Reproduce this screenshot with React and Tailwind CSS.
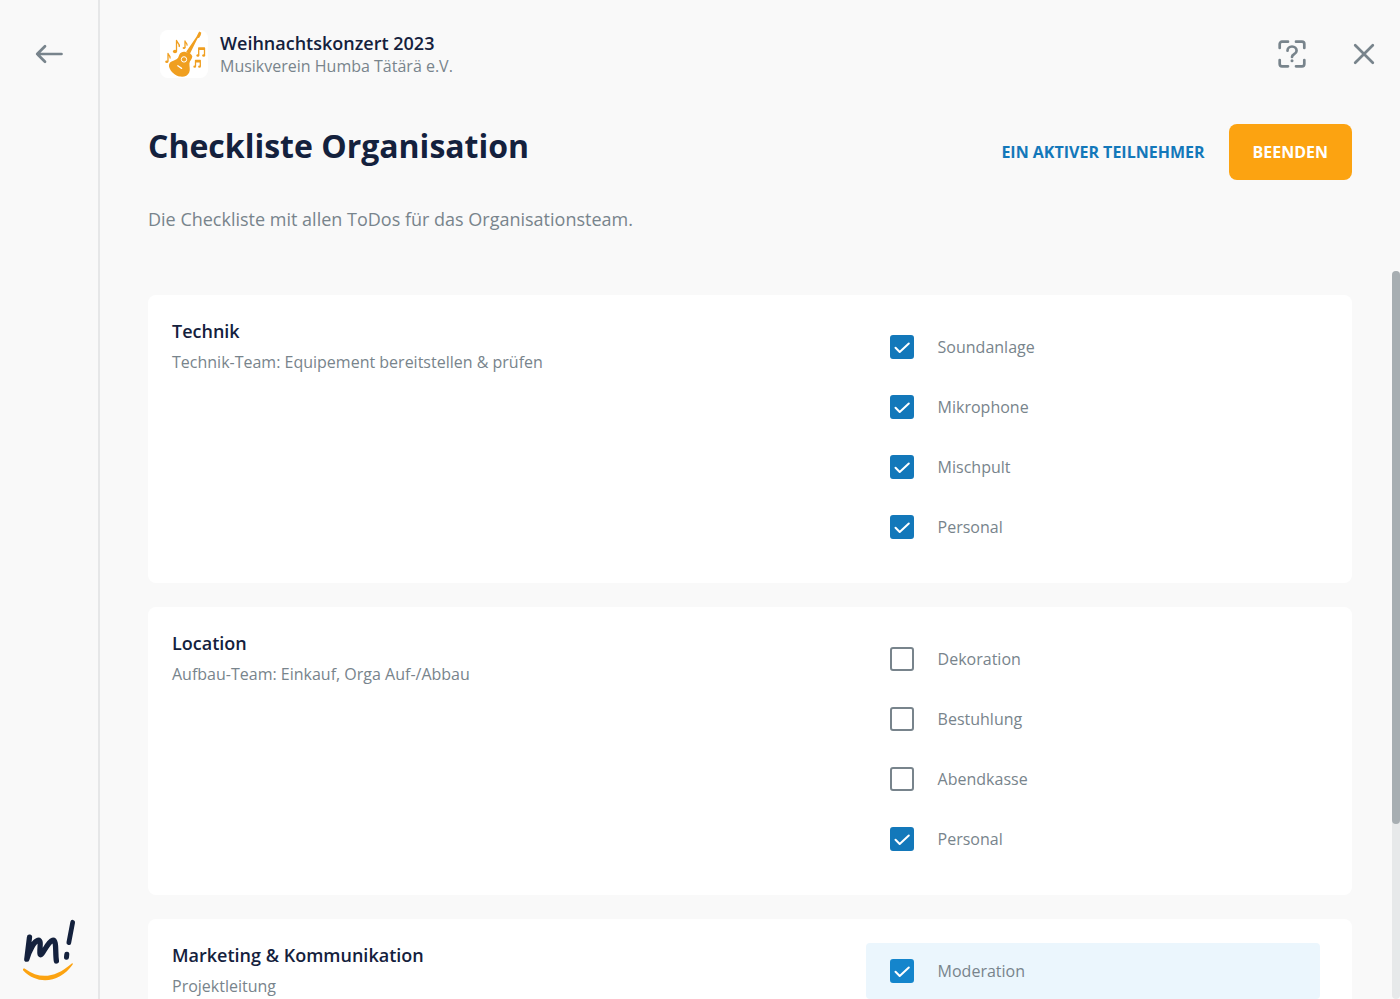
import { useState } from "react";

const SECTIONS = [
  {
    title: "Technik",
    subtitle: "Technik-Team: Equipement bereitstellen & prüfen",
    items: [
      { label: "Soundanlage", checked: true },
      { label: "Mikrophone", checked: true },
      { label: "Mischpult", checked: true },
      { label: "Personal", checked: true },
    ],
  },
  {
    title: "Location",
    subtitle: "Aufbau-Team: Einkauf, Orga Auf-/Abbau",
    items: [
      { label: "Dekoration", checked: false },
      { label: "Bestuhlung", checked: false },
      { label: "Abendkasse", checked: false },
      { label: "Personal", checked: true },
    ],
  },
  {
    title: "Marketing & Kommunikation",
    subtitle: "Projektleitung",
    items: [{ label: "Moderation", checked: true, active: true }],
  },
];

function BackIcon() {
  return (
    <svg viewBox="0 0 32 32" className="size-8" fill="none" stroke="currentColor" strokeWidth="2.7" strokeLinecap="round" strokeLinejoin="round" aria-hidden="true">
      <path d="M28.500 16H4.200M12 8.200L4.200 16l7.800 7.800" />
    </svg>
  );
}

function HelpIcon() {
  return (
    <svg viewBox="0 0 32 32" className="size-8" fill="none" stroke="currentColor" strokeWidth="2.700" strokeLinecap="round" strokeLinejoin="round" aria-hidden="true">
      <path d="M3.700 10V6a2.300 2.300 0 0 1 2.300-2.300h6M20 3.700h6A2.300 2.300 0 0 1 28.300 6v4M28.300 22v4a2.300 2.300 0 0 1-2.300 2.300h-6M12 28.300H6A2.300 2.300 0 0 1 3.700 26v-4" />
      <path d="M11.500 12.700c0-2.400 2-4.200 4.500-4.200s4.600 1.800 4.600 4.300c0 3.600-4.600 3.200-4.600 6.200" />
      <circle cx="16" cy="22.800" r="1.500" fill="currentColor" stroke="none" />
    </svg>
  );
}

function CloseIcon() {
  return (
    <svg viewBox="0 0 32 32" className="size-8" fill="none" stroke="currentColor" strokeWidth="2.700" strokeLinecap="round" aria-hidden="true">
      <path d="M7.200 7.200l17.600 17.600M24.800 7.200L7.200 24.800" />
    </svg>
  );
}

function GuitarLogo() {
  return (
    <svg viewBox="0 0 48 48" className="size-12" aria-hidden="true">
      <g fill="#f09f20">
        <path d="M38.600 2.600L39.600 1.600L41.300 2.700L40.700 5.300L39.200 7.700L37.600 8.300L29.800 24L26.200 21.800L36.500 6.800Z" />
        <path d="M19.400 24.600C20.600 22 23.600 21.400 26 22.200C28.500 22 32.200 24 32.300 26.600C32.300 29.300 29.600 30.600 29.400 33.600C29.300 36.500 30.500 39.500 29.200 42.600C27.800 46 24 47.200 20 46.600C15.500 46 10.500 41.500 9.200 37.200C8.300 33.500 10.500 31.300 14 30.400C18.500 29.200 18.200 27.200 19.400 24.600Z" />
      </g>
      <circle cx="24" cy="29.400" r="2.700" fill="none" stroke="#fff" strokeWidth="1" />
      <path d="M17.800 35.800l3.800 2.600" stroke="#fff" strokeWidth="1.300" strokeLinecap="round" />
      <g fill="none" stroke="#f09f20" strokeWidth="1.300" strokeLinejoin="round">
        <path d="M16.500 21V10.500c.5 2.500 3.500 2.500 2.700 6.500M25 18v-7c.3 1.800 2.600 1.800 2 4.600M8 31.500v-8c.4 2 2.700 2 2 5" />
        <path d="M38.700 25v-7h5.800v7M38.700 19.300h5.800M35.500 36.500v-6h4.800v6M35.500 31.800h4.800" />
      </g>
      <g fill="#f09f20">
        <ellipse cx="15" cy="21.500" rx="2.100" ry="1.700" />
        <ellipse cx="24" cy="18" rx="1.400" ry="1.100" />
        <ellipse cx="6.800" cy="31.700" rx="1.600" ry="1.300" />
        <ellipse cx="37.900" cy="25.500" rx="1.500" ry="1.200" />
        <ellipse cx="43.700" cy="25.500" rx="1.500" ry="1.200" />
        <ellipse cx="34.700" cy="36.700" rx="1.400" ry="1.100" />
        <ellipse cx="39.500" cy="36.700" rx="1.400" ry="1.100" />
      </g>
    </svg>
  );
}

function BrandLogo() {
  return (
    <svg viewBox="0 0 54 64" className="h-16 w-[54px]" fill="none" stroke="#14213d" strokeLinecap="round" strokeLinejoin="round" aria-hidden="true">
      <path strokeWidth="5.300" d="M7.500 18.200L4.800 40.200C7.500 31 12 22.800 16 21.300C20.300 20.500 16.800 32 18.200 35.500C20 38 25.500 22.500 30.500 21.300C35 20.500 33 33 34.400 42" />
      <path strokeWidth="4.700" d="M50.700 3.200L46.800 23.700" />
      <path strokeWidth="5" d="M44.800 35.300L44.500 38.200" />
      <path fill="#fca311" stroke="none" d="M1 51.300C.6 49.600 2 49 3.300 49.900C18 60.500 33 59 49.500 44.700C50.600 43.900 51.300 44.600 50.500 45.700C38 63.500 16 67 1 51.300Z" />
    </svg>
  );
}

function ChecklistItem({ id, item }) {
  const [checked, setChecked] = useState(item.checked);
  return (
    <label
      htmlFor={id}
      className={`flex h-14 cursor-pointer items-center gap-6 rounded px-6 hover:bg-[#ebf6fd] ${item.active ? "bg-[#ebf6fd]" : ""}`}
    >
      <span className="grid size-6 shrink-0">
        <input
          id={id}
          type="checkbox"
          checked={checked}
          onChange={(e) => setChecked(e.target.checked)}
          className={`peer col-start-1 row-start-1 size-6 appearance-none rounded-[3px] border-2 border-[#78848c] bg-white ${item.active ? "checked:border-[#1485cc] checked:bg-[#1485cc]" : "checked:border-[#1378ba] checked:bg-[#1378ba]"}`}
        />
        <svg
          viewBox="0 0 24 24"
          className="pointer-events-none invisible col-start-1 row-start-1 size-6 peer-checked:visible"
          fill="none"
          stroke="#fff"
          strokeWidth="2"
          strokeLinecap="round"
          strokeLinejoin="round"
          aria-hidden="true"
        >
          <path d="M5.500 12.800l4.200 4.200L18.800 8.500" />
        </svg>
      </span>
      <span>{item.label}</span>
    </label>
  );
}

function Section({ section, index }) {
  return (
    <section className="flex shrink-0 rounded-lg bg-white p-6">
      <div className="w-3/5">
        <h2 className="text-lg leading-6 font-semibold text-[#14213d]">{section.title}</h2>
        <p className="mt-[7px] leading-6">{section.subtitle}</p>
      </div>
      <div className="w-2/5 pr-2">
        {section.items.map((item, i) => (
          <div key={item.label} className="pb-1">
            <ChecklistItem id={`item-${index}-${i}`} item={item} />
          </div>
        ))}
      </div>
    </section>
  );
}

export default function App() {
  return (
    <div className="flex h-screen bg-[#f9f9f9] font-['Open_Sans',sans-serif] text-base text-[#78848c]">
      <aside className="flex w-[100px] shrink-0 flex-col items-center justify-between border-r-2 border-[#e6e7e8] pt-[38px] pb-4">
        <button type="button" aria-label="Zurück">
          <BackIcon />
        </button>
        <a href="#start" aria-label="Startseite">
          <BrandLogo />
        </a>
      </aside>

      <main className="flex min-w-0 flex-1 flex-col">
        <header className="flex h-[108px] shrink-0 items-center justify-between pr-5 pl-[60px]">
          <div className="flex items-center gap-3">
            <div className="overflow-hidden rounded-lg bg-white">
              <GuitarLogo />
            </div>
            <div>
              <p className="text-lg leading-6 font-semibold text-[#14213d]">Weihnachtskonzert 2023</p>
              <p className="leading-[22px]">Musikverein Humba Tätärä e.V.</p>
            </div>
          </div>
          <div className="flex gap-10">
            <button type="button" aria-label="Hilfe">
              <HelpIcon />
            </button>
            <button type="button" aria-label="Schließen">
              <CloseIcon />
            </button>
          </div>
        </header>

        <div className="shrink-0 px-12 pt-4 pb-[38px]">
          <div className="flex items-start justify-between">
            <h1 className="text-[32px] leading-[44px] font-bold text-[#14213d]">Checkliste Organisation</h1>
            <div className="flex items-center gap-6">
              <button type="button" className="font-bold text-[#1378ba]">
                EIN AKTIVER TEILNEHMER
              </button>
              <button type="button" className="h-14 rounded-lg bg-[#fca311] px-6 font-bold text-white">
                BEENDEN
              </button>
            </div>
          </div>
          <p className="mt-[25px] text-lg leading-7">Die Checkliste mit allen ToDos für das Organisationsteam.</p>
        </div>

        <div className="flex min-h-0 flex-1">
          <div className="flex min-w-0 flex-1 flex-col gap-6 overflow-y-auto pt-6 pr-10 pl-12 [scrollbar-width:none]">
            {SECTIONS.map((section, i) => (
              <Section key={section.title} section={section} index={i} />
            ))}
          </div>
          <div className="w-2 shrink-0 rounded bg-[#e7e9ea]" aria-hidden="true">
            <div className="h-[76%] rounded bg-[#a7aeb2]" />
          </div>
        </div>
      </main>
    </div>
  );
}
